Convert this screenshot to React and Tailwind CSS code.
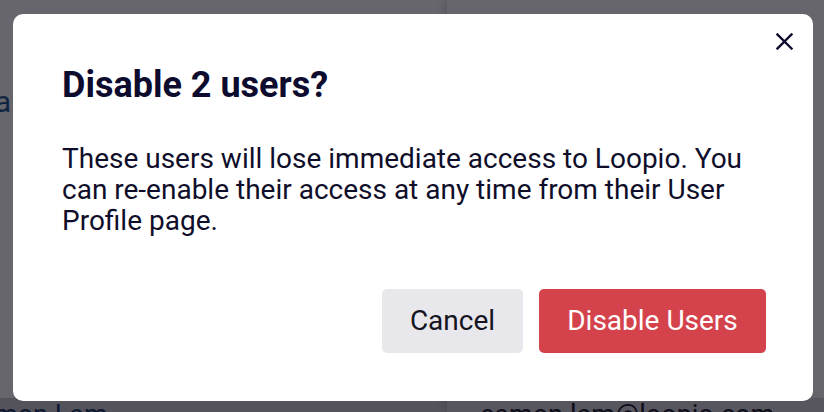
import React from 'react';

const App = () => {
  return (
    <div className="relative w-[824px] h-[412px] overflow-hidden bg-white font-['Roboto','Liberation_Sans',sans-serif]">
      {/* Page behind the dialog */}
      <div className="flex flex-col h-full">
        <div className="flex flex-1">
          <div className="w-[447px] pt-[84px]">
            <div className="w-[11px] flex justify-end whitespace-nowrap text-[30px] leading-[36px] text-[#2a5d96]">
              Kiana
            </div>
          </div>
          <div className="flex-1 shadow-[-4px_0_8px_rgba(0,0,0,0.12)]"></div>
        </div>
        <div className="h-[14px] flex bg-[#d0d0d8]">
          <div className="w-[447px] overflow-hidden">
            <div className="-ml-[36px] pt-[1px] whitespace-nowrap text-[27px] leading-[32px] text-[#1f3f6e]">Eamon Lam</div>
          </div>
          <div className="flex-1 pl-[33px] shadow-[-4px_0_8px_rgba(0,0,0,0.12)] bg-[#d8d8de]">
            <div className="pt-[1px] whitespace-nowrap text-[27px] leading-[32px] text-[#222233]">eamon.lam@loopio.com</div>
          </div>
        </div>
      </div>

      {/* Overlay + dialog */}
      <div className="absolute inset-0 bg-[#01000a]/60 pt-[14px] pl-[13px]">
        <div className="relative w-[800px] h-[387px] bg-white rounded-[10px] pt-[51px] pl-[49px] pr-[47px]">
          <button className="absolute top-[19px] right-[20px] w-[17px] h-[17px] text-[#0d0b2e]">
            <svg viewBox="0 0 17 17" width="17" height="17" fill="none" stroke="currentColor" strokeWidth="2.4" strokeLinecap="square">
              <path d="M1.5 1.5l14 14M15.5 1.5l-14 14" />
            </svg>
          </button>

          <h2 className="text-[36px] leading-[40px] font-bold text-[#0d0b2e]">Disable 2 users?</h2>

          <p className="mt-[38px] pr-[2px] text-[28px] leading-[31px] text-[#0f0e2a]">
            These users will lose immediate access to Loopio. You can re-enable their access at any time from their User Profile page.
          </p>

          <div className="mt-[53px] flex justify-end gap-[16px]">
            <button className="w-[141px] h-[64px] rounded-[5px] bg-[#e8e7ec] text-[28px] text-[#16151f]">
              Cancel
            </button>
            <button className="w-[227px] h-[64px] rounded-[5px] bg-[#d4434c] text-[28px] text-white">
              Disable Users
            </button>
          </div>
        </div>
      </div>
    </div>
  );
};

export default App;
